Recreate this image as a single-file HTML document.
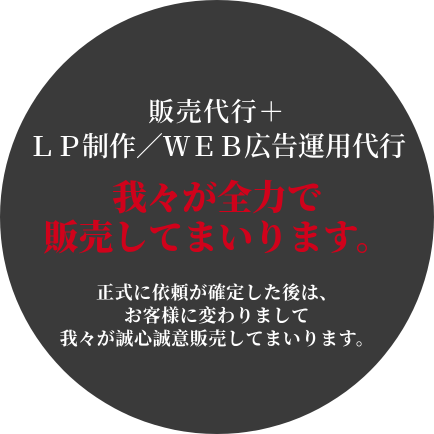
<!DOCTYPE html>
<html><head><meta charset="utf-8"><style>
html,body{margin:0;padding:0;width:434px;height:434px;background:#fff;overflow:hidden}
.c{position:absolute;left:0;top:0;width:434px;height:434px;border-radius:50%;background:#3a3a3a}
.t{position:absolute;left:0;width:434px;text-align:center;white-space:nowrap;font-family:"Liberation Serif","Noto Serif CJK SC",serif;color:#fff}
.w{font-size:26px;letter-spacing:1.5px;font-weight:600;line-height:1}
.lp{font-size:27px;letter-spacing:0px;font-weight:600;line-height:1}
.r{font-size:35px;letter-spacing:0px;font-weight:900;color:#d0021b;line-height:1}
.s{font-size:18px;letter-spacing:0.6px;font-weight:700;line-height:1}
</style></head><body>
<div class="c"></div>
<div class="t w" style="top:100px">販売代行＋</div>
<div class="t lp" style="top:134px">ＬＰ制作／ＷＥＢ広告運用代行</div>
<div class="t r" style="top:181px">我々が全力で</div>
<div class="t r" style="top:221px">販売してまいります。</div>
<div class="t s" style="top:284px">正式に依頼が確定した後は、</div>
<div class="t s" style="top:307px">お客様に変わりまして</div>
<div class="t s" style="top:330px">我々が誠心誠意販売してまいります。</div>
</body></html>
